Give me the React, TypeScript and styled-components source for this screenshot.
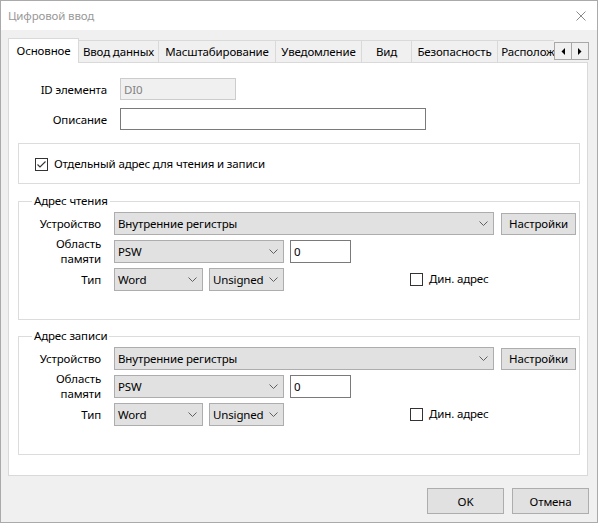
import React from "react";
import styled, { createGlobalStyle } from "styled-components";

const GlobalStyle = createGlobalStyle`
  html, body { margin: 0; padding: 0; background: #ffffff; }
  body {
    font-family: "Noto Sans", "Segoe UI", sans-serif;
    font-size: 11.5px;
    letter-spacing: -0.15px;
    color: #000000;
  }
  * { box-sizing: border-box; }
`;

const Window = styled.div`
  width: 598px;
  height: 523px;
  border: 1px solid #aaaaaa;
  background: #f0f0f0;
  display: flex;
  flex-direction: column;
  overflow: hidden;
`;

const TitleBar = styled.div`
  height: 29px;
  flex: none;
  background: #ffffff;
  display: flex;
  align-items: center;
  justify-content: space-between;
  padding: 0 11px 0 7px;
`;

const Title = styled.span`
  color: #999999;
`;

const Body = styled.div`
  flex: 1;
  display: flex;
  flex-direction: column;
  padding: 8px 8px 8px 7px;
`;

const TabStrip = styled.div`
  height: 24px;
  flex: none;
  display: flex;
  align-items: flex-end;
`;

const TabViewport = styled.div`
  flex: 1;
  height: 25px;
  margin-bottom: -1px;
  position: relative;
  z-index: 1;
  display: flex;
  align-items: flex-end;
  overflow: hidden;
`;

const Tab = styled.div<{ $w: number; $active?: boolean }>`
  flex: none;
  width: ${(p) => p.$w}px;
  height: ${(p) => (p.$active ? 25 : 22)}px;
  margin-bottom: ${(p) => (p.$active ? 0 : 1)}px;
  margin-left: -1px;
  &:first-child { margin-left: 0; }
  border: 1px solid #d9d9d9;
  border-bottom: none;
  background: ${(p) => (p.$active ? "#ffffff" : "#f0f0f0")};
  display: flex;
  align-items: center;
  justify-content: center;
  white-space: nowrap;
  padding-bottom: ${(p) => (p.$active ? 1 : 0)}px;
  position: relative;
  z-index: ${(p) => (p.$active ? 2 : 1)};
`;

const ScrollButtons = styled.div`
  flex: none;
  display: flex;
  margin-bottom: 2px;
`;

const ScrollButton = styled.div`
  width: 18px;
  height: 18px;
  border: 1px solid #a8a8a8;
  background: #f0f0f0;
  display: flex;
  align-items: center;
  justify-content: center;
  & + & { margin-left: -1px; }
`;

const Panel = styled.div`
  flex: 1;
  margin-right: 1px;
  background: #ffffff;
  border: 1px solid #d9d9d9;
  padding: 15px 7px 0 0;
  display: flex;
  flex-direction: column;
`;

const FieldRow = styled.div<{ $mt?: number }>`
  display: flex;
  align-items: center;
  height: 22px;
  margin-top: ${(p) => p.$mt ?? 0}px;
`;

const FieldLabel = styled.span`
  width: 98px;
  margin-right: 13px;
  text-align: right;
  white-space: nowrap;
`;

const TextBox = styled.div<{ $w: number; $disabled?: boolean; $h?: number; $ml?: number }>`
  width: ${(p) => p.$w}px;
  height: ${(p) => p.$h ?? 22}px;
  margin-left: ${(p) => p.$ml ?? 0}px;
  border: 1px solid ${(p) => (p.$disabled ? "#cccccc" : "#7a7a7a")};
  background: ${(p) => (p.$disabled ? "#f0f0f0" : "#ffffff")};
  color: ${(p) => (p.$disabled ? "#838383" : "#000000")};
  display: flex;
  align-items: center;
  padding: 0 3px;
  white-space: nowrap;
`;

const OptionBox = styled.div`
  margin: 13px 0 0 9px;
  height: 41px;
  border: 1px solid #dcdcdc;
  display: flex;
  align-items: center;
  padding-left: 16px;
`;

const CheckOption = styled.label<{ $ml?: number; $mt?: number }>`
  display: flex;
  align-items: center;
  gap: 6px;
  margin-left: ${(p) => p.$ml ?? 0}px;
  margin-top: ${(p) => p.$mt ?? 0}px;
  align-self: ${(p) => (p.$mt ? "flex-start" : "center")};
  white-space: nowrap;
`;

const CheckBoxBox = styled.span`
  width: 13px;
  height: 13px;
  border: 1px solid #333333;
  background: #ffffff;
  display: flex;
  align-items: center;
  justify-content: center;
  margin-top: 1px;
`;

const Group = styled.fieldset<{ $mt: number }>`
  margin: ${(p) => p.$mt}px 0 0 9px;
  padding: 0;
  min-width: 0;
  border: 1px solid #dcdcdc;
`;

const Legend = styled.legend`
  margin-left: 13px;
  padding: 0 2px;
  line-height: 16px;
`;

const GroupBody = styled.div`
  display: flex;
  flex-direction: column;
  padding: 3px 0 28px 0;
`;

const GroupRow = styled.div<{ $h: number; $mt?: number }>`
  display: flex;
  align-items: center;
  height: ${(p) => p.$h}px;
  margin-top: ${(p) => p.$mt ?? 0}px;
`;

const GroupLabel = styled.span`
  width: 82px;
  margin-right: 13px;
  text-align: right;
  line-height: 15px;
  white-space: nowrap;
`;

const Combo = styled.div<{ $w: number; $ml?: number }>`
  width: ${(p) => p.$w}px;
  height: 23px;
  margin-left: ${(p) => p.$ml ?? 0}px;
  background: #e1e1e1;
  border: 1px solid #adadad;
  display: flex;
  align-items: center;
  justify-content: space-between;
  padding: 0 5px 0 3px;
  white-space: nowrap;
`;

const Button = styled.div<{ $w: number; $h: number; $ml?: number }>`
  width: ${(p) => p.$w}px;
  height: ${(p) => p.$h}px;
  margin-left: ${(p) => p.$ml ?? 0}px;
  background: #e1e1e1;
  border: 1px solid #adadad;
  display: flex;
  align-items: center;
  justify-content: center;
  white-space: nowrap;
`;

const Footer = styled.div`
  flex: none;
  margin-top: 12px;
  display: flex;
  justify-content: flex-end;
  gap: 8px;
`;

const Chevron = () => (
  <svg width="9" height="5" viewBox="0 0 9 5">
    <path d="M0.5 0.5 L4.5 4.5 L8.5 0.5" fill="none" stroke="#606060" strokeWidth="1" />
  </svg>
);

const CloseIcon = () => (
  <svg width="10" height="10" viewBox="0 0 10 10">
    <path d="M0.5 0.5 L9.5 9.5 M9.5 0.5 L0.5 9.5" stroke="#8a8a8a" strokeWidth="1" />
  </svg>
);

const Tick = () => (
  <svg width="11" height="11" viewBox="0 0 11 11">
    <path d="M1.5 5.5 L4 8 L9.5 2.5" fill="none" stroke="#333333" strokeWidth="1.1" />
  </svg>
);

const Arrow = ({ dir }: { dir: "left" | "right" }) => (
  <svg width="4" height="7" viewBox="0 0 4 7">
    {dir === "left" ? (
      <path d="M4 0 L4 7 L0.5 3.5 Z" fill="#000" />
    ) : (
      <path d="M0 0 L0 7 L3.5 3.5 Z" fill="#000" />
    )}
  </svg>
);

const CheckBox = ({ checked }: { checked?: boolean }) => (
  <CheckBoxBox>{checked ? <Tick /> : null}</CheckBoxBox>
);

const tabs: { title: string; w: number }[] = [
  { title: "Основное", w: 71 },
  { title: "Ввод данных", w: 81 },
  { title: "Масштабирование", w: 118 },
  { title: "Уведомление", w: 87 },
  { title: "Вид", w: 51 },
  { title: "Безопасность", w: 87 },
  { title: "Расположение", w: 88 },
];

const AddressGroup = ({ title, mt }: { title: string; mt: number }) => (
  <Group $mt={mt}>
    <Legend>{title}</Legend>
    <GroupBody>
      <GroupRow $h={23}>
        <GroupLabel>Устройство</GroupLabel>
        <Combo $w={380}>
          <span>Внутренние регистры</span>
          <Chevron />
        </Combo>
        <Button $w={75} $h={22} $ml={7}>Настройки</Button>
      </GroupRow>
      <GroupRow $h={30} $mt={1}>
        <GroupLabel>
          Область
          <br />
          памяти
        </GroupLabel>
        <Combo $w={170}>
          <span>PSW</span>
          <Chevron />
        </Combo>
        <TextBox $w={61} $h={23} $ml={6}>0</TextBox>
      </GroupRow>
      <GroupRow $h={23} $mt={2}>
        <GroupLabel>Тип</GroupLabel>
        <Combo $w={89}>
          <span>Word</span>
          <Chevron />
        </Combo>
        <Combo $w={75} $ml={6}>
          <span>Unsigned</span>
          <Chevron />
        </Combo>
        <CheckOption $ml={126} $mt={3}>
          <CheckBox />
          <span>Дин. адрес</span>
        </CheckOption>
      </GroupRow>
    </GroupBody>
  </Group>
);

export default function App() {
  return (
    <>
      <GlobalStyle />
      <Window>
        <TitleBar>
          <Title>Цифровой ввод</Title>
          <CloseIcon />
        </TitleBar>
        <Body>
          <TabStrip>
            <TabViewport>
              {tabs.map((t, i) => (
                <Tab key={t.title} $w={t.w} $active={i === 0}>
                  {t.title}
                </Tab>
              ))}
            </TabViewport>
            <ScrollButtons>
              <ScrollButton>
                <Arrow dir="left" />
              </ScrollButton>
              <ScrollButton>
                <Arrow dir="right" />
              </ScrollButton>
            </ScrollButtons>
          </TabStrip>
          <Panel>
            <FieldRow>
              <FieldLabel>ID элемента</FieldLabel>
              <TextBox $w={116} $disabled>DI0</TextBox>
            </FieldRow>
            <FieldRow $mt={8}>
              <FieldLabel>Описание</FieldLabel>
              <TextBox $w={306} />
            </FieldRow>
            <OptionBox>
              <CheckOption>
                <CheckBox checked />
                <span>Отдельный адрес для чтения и записи</span>
              </CheckOption>
            </OptionBox>
            <AddressGroup title="Адрес чтения" mt={9} />
            <AddressGroup title="Адрес записи" mt={8} />
          </Panel>
          <Footer>
            <Button $w={77} $h={26}>OK</Button>
            <Button $w={77} $h={26}>Отмена</Button>
          </Footer>
        </Body>
      </Window>
    </>
  );
}
